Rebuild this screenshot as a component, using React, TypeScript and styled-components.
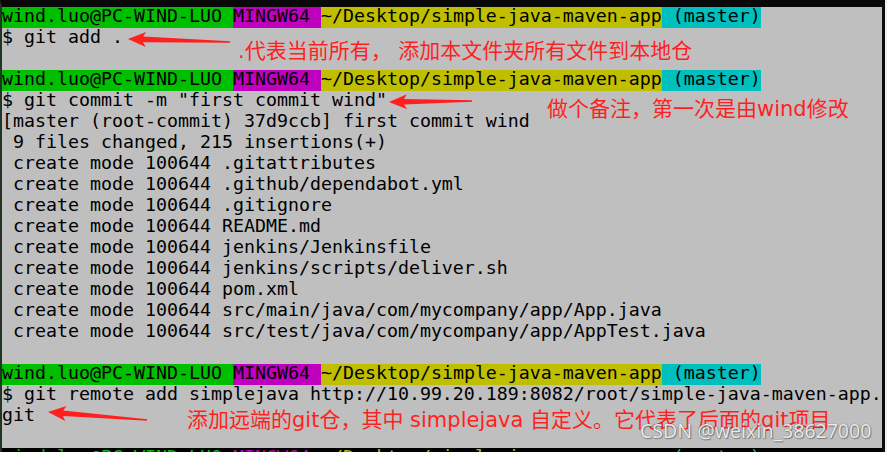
import React from "react";
import styled, { createGlobalStyle } from "styled-components";

const GlobalStyle = createGlobalStyle`
  html, body { margin: 0; padding: 0; background: #f0f0f0; }
  #root { width: 887px; height: 452px; overflow: hidden; }
`;

const Frame = styled.div`
  position: relative;
  box-sizing: border-box;
  width: 885px;
  height: 452px;
  overflow: hidden;
  background: #bfbfbf;
  border-top: 7px solid #080808;
  border-left: 2px solid #243424;
  border-right: 3px solid #0c0c0c;
`;

const Screen = styled.div`
  display: flex;
  flex-direction: column;
  padding-left: 0;
  font-family: "DejaVu Sans Mono", "Liberation Mono", monospace;
  font-size: 18.275px;
  color: #000;
`;

const Line = styled.div<{ $dark?: boolean }>`
  display: flex;
  height: 21px;
  line-height: 18px;
  white-space: pre;
  background: ${(p) => (p.$dark ? "#000" : "transparent")};
`;

const Seg = styled.span<{ $bg?: string; $fg?: string }>`
  display: block;
  height: 21px;
  white-space: pre;
  background: ${(p) => p.$bg ?? "transparent"};
  color: ${(p) => p.$fg ?? "#000"};
`;

const Overlay = styled.svg`
  position: absolute;
  left: 0;
  top: 0;
  width: 880px;
  height: 445px;
  pointer-events: none;
`;

const Note = styled.div<{ $left: number; $top: number }>`
  position: absolute;
  left: ${(p) => p.$left}px;
  top: ${(p) => p.$top}px;
  font-family: "DejaVu Sans", "Noto Sans CJK SC", sans-serif;
  font-size: 21px;
  line-height: 21px;
  color: #ff1f1f;
  white-space: pre;
`;

const Watermark = styled.div`
  position: absolute;
  left: 638px;
  top: 414px;
  font-family: "Noto Sans", "DejaVu Sans", sans-serif;
  font-size: 19.5px;
  line-height: 20px;
  color: rgba(255, 255, 255, 0.88);
  text-shadow: 0 0 1px rgba(70, 70, 70, 0.9), 1px 1px 1px rgba(90, 90, 90, 0.6);
  white-space: pre;
`;

const GREEN = "#00bf00";
const MAGENTA = "#bf00bf";
const YELLOW = "#bfbf00";
const CYAN = "#00bfbf";

const Prompt: React.FC<{ dark?: boolean }> = ({ dark }) => {
  if (dark) {
    return (
      <Line $dark>
        <Seg $fg={GREEN}>wind.luo@PC-WIND-LUO </Seg>
        <Seg $fg={MAGENTA}>MINGW64 </Seg>
        <Seg $fg={YELLOW}>~/Desktop/simple-java-maven-app</Seg>
        <Seg $fg={CYAN}> (master)</Seg>
      </Line>
    );
  }
  return (
    <Line>
      <Seg $bg={GREEN}>wind.luo@PC-WIND-LUO </Seg>
      <Seg $bg={MAGENTA}>MINGW64 </Seg>
      <Seg $bg={YELLOW}>~/Desktop/simple-java-maven-app</Seg>
      <Seg $bg={CYAN}> (master)</Seg>
    </Line>
  );
};

const Text: React.FC<{ children?: React.ReactNode }> = ({ children }) => (
  <Line>
    <Seg>{children}</Seg>
  </Line>
);

type Pt = [number, number];

function arrowPoints(tip: Pt, tail: Pt): string {
  const headLen = 18;
  const headHalf = 7.5;
  const shaftHead = 2.8;
  const shaftTail = 0.7;
  const notch = 3;
  const dx = tail[0] - tip[0];
  const dy = tail[1] - tip[1];
  const len = Math.hypot(dx, dy);
  const ux = dx / len;
  const uy = dy / len;
  const nx = -uy;
  const ny = ux;
  const bx = tip[0] + ux * headLen;
  const by = tip[1] + uy * headLen;
  const sx = tip[0] + ux * (headLen - notch);
  const sy = tip[1] + uy * (headLen - notch);
  const pts: Pt[] = [
    tip,
    [bx + nx * headHalf, by + ny * headHalf],
    [sx + nx * shaftHead, sy + ny * shaftHead],
    [tail[0] + nx * shaftTail, tail[1] + ny * shaftTail],
    [tail[0] - nx * shaftTail, tail[1] - ny * shaftTail],
    [sx - nx * shaftHead, sy - ny * shaftHead],
    [bx - nx * headHalf, by - ny * headHalf],
  ];
  return pts.map((p) => `${p[0].toFixed(1)},${p[1].toFixed(1)}`).join(" ");
}

const Arrow: React.FC<{ tip: Pt; tail: Pt }> = ({ tip, tail }) => (
  <polygon points={arrowPoints(tip, tail)} fill="#ff1f1f" />
);

export default function App() {
  return (
    <>
      <GlobalStyle />
      <Frame>
        <Screen>
          <Prompt />
          <Text>$ git add .</Text>
          <Text />
          <Prompt />
          <Text>$ git commit -m "first commit wind"</Text>
          <Text>[master (root-commit) 37d9ccb] first commit wind</Text>
          <Text> 9 files changed, 215 insertions(+)</Text>
          <Text> create mode 100644 .gitattributes</Text>
          <Text> create mode 100644 .github/dependabot.yml</Text>
          <Text> create mode 100644 .gitignore</Text>
          <Text> create mode 100644 README.md</Text>
          <Text> create mode 100644 jenkins/Jenkinsfile</Text>
          <Text> create mode 100644 jenkins/scripts/deliver.sh</Text>
          <Text> create mode 100644 pom.xml</Text>
          <Text> create mode 100644 src/main/java/com/mycompany/app/App.java</Text>
          <Text> create mode 100644 src/test/java/com/mycompany/app/AppTest.java</Text>
          <Text />
          <Prompt />
          <Text>$ git remote add simplejava http://10.99.20.189:8082/root/simple-java-maven-app.</Text>
          <Text>git</Text>
          <Text />
          <Prompt dark />
        </Screen>
        <Overlay viewBox="0 0 880 445">
          <Arrow tip={[126, 32]} tail={[228, 35]} />
          <Arrow tip={[387, 95]} tail={[470, 94]} />
          <Arrow tip={[46, 405]} tail={[145, 413]} />
        </Overlay>
        <Note $left={236} $top={34}>.代表当前所有， 添加本文件夹所有文件到本地仓</Note>
        <Note $left={545} $top={92}>做个备注，第一次是由wind修改</Note>
        <Note $left={185} $top={403}>添加远端的git仓，其中 simplejava 自定义。它代表了后面的git项目</Note>
        <Watermark>CSDN @weixin_38627000</Watermark>
      </Frame>
    </>
  );
}
